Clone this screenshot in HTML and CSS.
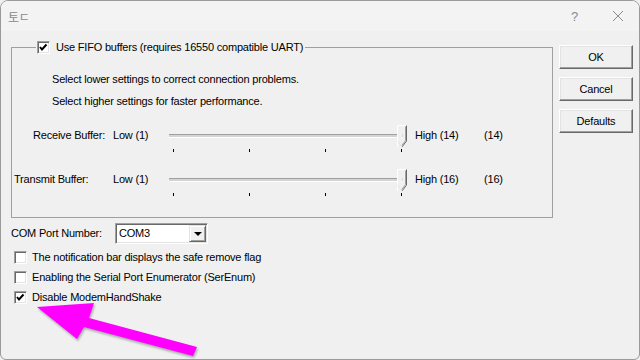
FILE: index.html
```html
<!DOCTYPE html>
<html lang="ko">
<head>
    <meta charset="UTF-8">
    <meta name="viewport" content="width=device-width, initial-scale=1.0">
    <title>Port Settings</title>
    <link rel="stylesheet" href="styles.css">
</head>
<body>

<div class="window">
    <div class="titlebar">
        <span class="title">토ㄷ</span>
        <span class="tb-help">?</span>
        <span class="tb-close">
            <svg width="12" height="12" viewBox="0 0 12 12"><path d="M1 1 L11 11 M11 1 L1 11" stroke="#8a8a8a" stroke-width="1" fill="none"/></svg>
        </span>
    </div>

    <div class="client">
        <div class="main">
            <fieldset class="group">
                <legend>
                    <label class="check">
                        <span class="box">
                            <svg width="11" height="11" viewBox="0 0 11 11"><polyline points="2,5 4,7.5 8.5,2.5" stroke="#000" stroke-width="2" fill="none"/></svg>
                        </span>
                        <span class="legend-text">Use FIFO buffers (requires 16550 compatible UART)</span>
                    </label>
                </legend>

                <p class="hint first">Select lower settings to correct connection problems.</p>
                <p class="hint">Select higher settings for faster performance.</p>

                <div class="slider-row first">
                    <span class="lbl lbl-recv">Receive Buffer:</span>
                    <span class="lbl">Low (1)</span>
                    <div class="slider">
                        <div class="track"></div>
                        <div class="ticks"><i></i><i></i><i></i><i></i></div>
                        <svg class="thumb" width="11" height="23" viewBox="0 0 11 23">
                            <path d="M0.5 22 L0.5 0.5 L9.5 0.5" stroke="#fff" fill="#f0f0f0"/>
                            <path d="M9.5 0.5 L9.5 16 L5 22" stroke="#696969" fill="none"/>
                            <path d="M8.5 1.5 L8.5 15.5 L4.8 20.5" stroke="#a0a0a0" fill="none"/>
                            <path d="M0.5 16 L5 22" stroke="#e3e3e3" fill="none"/>
                        </svg>
                    </div>
                    <span class="lbl">High (14)</span>
                    <span class="lbl">(14)</span>
                </div>

                <div class="slider-row">
                    <span class="lbl lbl-xmit">Transmit Buffer:</span>
                    <span class="lbl">Low (1)</span>
                    <div class="slider">
                        <div class="track"></div>
                        <div class="ticks"><i></i><i></i><i></i><i></i></div>
                        <svg class="thumb" width="11" height="23" viewBox="0 0 11 23">
                            <path d="M0.5 22 L0.5 0.5 L9.5 0.5" stroke="#fff" fill="#f0f0f0"/>
                            <path d="M9.5 0.5 L9.5 16 L5 22" stroke="#696969" fill="none"/>
                            <path d="M8.5 1.5 L8.5 15.5 L4.8 20.5" stroke="#a0a0a0" fill="none"/>
                            <path d="M0.5 16 L5 22" stroke="#e3e3e3" fill="none"/>
                        </svg>
                    </div>
                    <span class="lbl">High (16)</span>
                    <span class="lbl">(16)</span>
                </div>
            </fieldset>

            <div class="port-row">
                <span class="port-label">COM Port Number:</span>
                <div class="combo">
                    <span class="combo-text">COM3</span>
                    <span class="combo-btn"><span class="caret"></span></span>
                </div>
            </div>

            <label class="check opt">
                <span class="box"></span>
                <span>The notification bar displays the safe remove flag</span>
            </label>
            <label class="check opt">
                <span class="box"></span>
                <span>Enabling the Serial Port Enumerator (SerEnum)</span>
            </label>
            <label class="check opt">
                <span class="box">
                    <svg width="11" height="11" viewBox="0 0 11 11"><polyline points="2,5 4,7.5 8.5,2.5" stroke="#000" stroke-width="2" fill="none"/></svg>
                </span>
                <span>Disable ModemHandShake</span>
            </label>
        </div>

        <div class="side">
            <button class="btn">OK</button>
            <button class="btn">Cancel</button>
            <button class="btn">Defaults</button>
        </div>
    </div>

    <!-- annotation arrow drawn over the dialog -->
    <svg class="arrow" width="640" height="360" viewBox="0 0 640 360">
        <polygon points="37,307 94,303 89,318 197,347 193,356 84,327 77,339" fill="#ff00ff"/>
    </svg>
</div>

</body>
</html>
```

FILE: styles.css
```css
body {
    margin: 0;
    padding: 0;
    background: #f0f0f0;
    font-family: 'Liberation Sans', Arial, sans-serif;
    font-size: 11px;
    line-height: 13px;
    letter-spacing: -0.2px;
    color: #000;
}
.window {
    position: relative;
    box-sizing: border-box;
    height: 360px;
    border: 1px solid #9a9a9a;
    border-radius: 8px 8px 6px 6px;
    background: #f0f0f0;
    overflow: hidden;
}
.titlebar {
    display: flex;
    align-items: center;
    height: 30px;
    background: #f3f3f3;
    color: #8a8a8a;
}
.title {
    margin-left: 7px;
    font-family: 'Noto Sans CJK KR', 'Liberation Sans', sans-serif;
    font-size: 12px;
    flex: 1;
}
.tb-help {
    font-family: 'Liberation Sans', sans-serif;
    font-size: 13px;
    margin-right: 34px;
}
.tb-close {
    display: flex;
    margin-right: 15px;
}
.client {
    display: flex;
    padding: 10px 0 0 10px;
}
.main {
    width: 542px;
}
.side {
    display: flex;
    flex-direction: column;
    gap: 8px;
    margin: 4px 0 0 6px;
}
.btn {
    box-sizing: border-box;
    width: 74px;
    height: 24px;
    padding: 0;
    font-family: 'Liberation Sans', Arial, sans-serif;
    font-size: 11px;
    letter-spacing: -0.2px;
    color: #000;
    background: #f0f0f0;
    border: 1px solid;
    border-color: #fff #696969 #696969 #fff;
    box-shadow: inset -1px -1px 0 #a0a0a0, inset 1px 1px 0 #e3e3e3;
}

/* group box */
.group {
    margin: 0;
    padding: 0 0 21px 0;
    border: 1px solid #a0a0a0;
    min-width: 0;
}
.group legend {
    margin-left: 24px;
    padding: 0 2px 0 1px;
}
.check {
    display: flex;
    align-items: center;
    height: 13px;
}
.box {
    box-sizing: border-box;
    display: flex;
    align-items: center;
    justify-content: center;
    width: 13px;
    height: 13px;
    background: #fff;
    border: 1px solid;
    border-color: #a0a0a0 #fff #fff #a0a0a0;
    box-shadow: inset 1px 1px 0 #696969, inset -1px -1px 0 #e3e3e3;
}
.legend-text {
    margin-left: 6px;
}
.hint {
    margin: 9px 0 0 40px;
}
.hint.first {
    margin-top: 19px;
}

/* sliders */
.slider-row {
    display: grid;
    grid-template-columns: 101px 56px 246px 69px auto;
    align-items: start;
    margin-top: 17px;
}
.slider-row .lbl {
    margin-top: 4px;
    white-space: nowrap;
}
.lbl-recv {
    padding-left: 21px;
}
.lbl-xmit {
    padding-left: 2px;
}
.slider {
    position: relative;
    height: 27px;
}
.track {
    margin-top: 9px;
    width: 234px;
    height: 4px;
    box-sizing: border-box;
    border-top: 1px solid #a0a0a0;
    border-bottom: 1px solid #fff;
    background: #d4d4d4;
}
.ticks {
    display: flex;
    justify-content: space-between;
    width: 229px;
    margin: 11px 0 0 4px;
}
.ticks i {
    width: 1px;
    height: 3px;
    background: #000;
}
.thumb {
    position: absolute;
    left: 228px;
    top: 0;
}

/* bottom options */
.port-row {
    display: flex;
    align-items: center;
    margin-top: 5px;
}
.port-label {
    width: 104px;
}
.combo {
    box-sizing: border-box;
    display: flex;
    align-items: center;
    width: 93px;
    height: 21px;
    padding: 1px;
    background: #fff;
    border: 1px solid;
    border-color: #a0a0a0 #fff #fff #a0a0a0;
    box-shadow: inset 1px 1px 0 #696969, inset -1px -1px 0 #e3e3e3;
}
.combo-text {
    flex: 1;
    padding-left: 2px;
}
.combo-btn {
    box-sizing: border-box;
    display: flex;
    align-items: center;
    justify-content: center;
    width: 17px;
    height: 17px;
    background: #f0f0f0;
    border: 1px solid;
    border-color: #e3e3e3 #696969 #696969 #e3e3e3;
    box-shadow: inset 1px 1px 0 #fff, inset -1px -1px 0 #a0a0a0;
}
.caret {
    width: 0;
    height: 0;
    border-left: 4px solid transparent;
    border-right: 4px solid transparent;
    border-top: 4px solid #000;
}
.opt {
    margin: 7px 0 0 3px;
}
.opt .box {
    margin-right: 5px;
}
.arrow {
    position: absolute;
    left: -1px;
    top: -1px;
    pointer-events: none;
    filter: drop-shadow(1px 2px 1px rgba(0, 0, 0, 0.3));
}
```
